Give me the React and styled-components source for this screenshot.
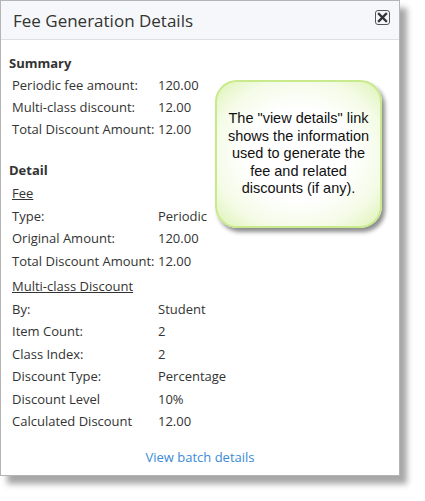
import React from 'react';
import styled, { createGlobalStyle } from 'styled-components';

const GlobalStyle = createGlobalStyle`
  html, body {
    margin: 0;
    padding: 0;
    background: #ffffff;
  }
  body {
    font-family: 'Open Sans', 'Liberation Sans', sans-serif;
    color: #333333;
  }
`;

const summary = [
  ['Periodic fee amount:', '120.00'],
  ['Multi-class discount:', '12.00'],
  ['Total Discount Amount:', '12.00'],
];

const fee = [
  ['Type:', 'Periodic'],
  ['Original Amount:', '120.00'],
  ['Total Discount Amount:', '12.00'],
];

const multiClass = [
  ['By:', 'Student'],
  ['Item Count:', '2'],
  ['Class Index:', '2'],
  ['Discount Type:', 'Percentage'],
  ['Discount Level', '10%'],
  ['Calculated Discount', '12.00'],
];

export default function App() {
  return (
    <Page>
      <GlobalStyle />
      <Dialog>
        <Header>
          <Title>Fee Generation Details</Title>
          <CloseButton aria-label="close">
            <svg width="11" height="11" viewBox="0 0 11 11">
              <path d="M2 2 L9 9 M9 2 L2 9" stroke="#333" strokeWidth="2.4" strokeLinecap="square" />
            </svg>
          </CloseButton>
        </Header>
        <Body>
          <SectionTitle>Summary</SectionTitle>
          <Table>
            {summary.map(([k, v]) => (
              <Row key={k} $h={22}>
                <Label>{k}</Label>
                <Value>{v}</Value>
              </Row>
            ))}
          </Table>

          <SectionTitle $top={19}>Detail</SectionTitle>
          <SubTitle $top={1}>Fee</SubTitle>
          <Table>
            {fee.map(([k, v]) => (
              <Row key={k}>
                <Label>{k}</Label>
                <Value>{v}</Value>
              </Row>
            ))}
          </Table>
          <SubTitle $top={3}>Multi-class Discount</SubTitle>
          <Table>
            {multiClass.map(([k, v]) => (
              <Row key={k}>
                <Label>{k}</Label>
                <Value>{v}</Value>
              </Row>
            ))}
          </Table>
          <Footer>
            <BatchLink href="#">View batch details</BatchLink>
          </Footer>
        </Body>
        <Callout>
          The "view details" link shows the information used to generate the fee and related discounts (if any).
        </Callout>
      </Dialog>
    </Page>
  );
}

const Page = styled.div`
  width: 425px;
  height: 501px;
  overflow: hidden;
`;

const Dialog = styled.div`
  position: relative;
  box-sizing: border-box;
  width: 400px;
  height: 476px;
  border: 1px solid #b4b4b4;
  background: #ffffff;
  box-shadow: 7px 8px 6px rgba(0, 0, 0, 0.35);
`;

const Header = styled.div`
  display: flex;
  align-items: center;
  justify-content: space-between;
  height: 38px;
  padding: 0 9px 0 12px;
  background: #f5f7fa;
  border-bottom: 1px solid #dcdfe3;
`;

const Title = styled.h1`
  margin: 0;
  font-size: 17px;
  font-weight: 400;
  color: #333;
`;

const CloseButton = styled.button`
  display: flex;
  align-items: center;
  justify-content: center;
  box-sizing: border-box;
  width: 15px;
  height: 15px;
  padding: 0;
  margin-top: -6px;
  border: 1px solid #555;
  border-radius: 3px;
  background: #f5f7fa;
`;

const Body = styled.div`
  padding: 12px 0 0 8px;
  font-size: 13px;
`;

const SectionTitle = styled.div`
  margin-top: ${(p) => p.$top || 0}px;
  font-weight: 700;
  line-height: 22px;
  color: #333;
`;

const SubTitle = styled.div`
  margin: ${(p) => p.$top || 0}px 0 0 3px;
  line-height: 22.5px;
  text-decoration: underline;
`;

const Table = styled.div`
  display: flex;
  flex-direction: column;
  padding-left: 3px;
`;

const Row = styled.div`
  display: grid;
  grid-template-columns: 146px 1fr;
  line-height: ${(p) => p.$h || 22.5}px;
`;

const Label = styled.span`
  white-space: nowrap;
`;

const Value = styled.span``;

const Footer = styled.div`
  display: flex;
  justify-content: center;
  padding-top: 13px;
  padding-right: 8px;
`;

const BatchLink = styled.a`
  color: #3b8bd6;
  text-decoration: none;
  line-height: 22px;
`;

const Callout = styled.div`
  position: absolute;
  left: 214px;
  top: 79px;
  box-sizing: border-box;
  width: 167px;
  height: 148px;
  padding: 0 10px;
  display: flex;
  align-items: center;
  justify-content: center;
  text-align: center;
  border: 2px solid #c9ea8c;
  border-radius: 22px;
  background: radial-gradient(ellipse at center, #ffffff 45%, #f4fbe6 75%, #ddf3b4 100%);
  box-shadow: 3px 4px 4px rgba(0, 0, 0, 0.45);
  font-family: 'Liberation Sans', Arial, sans-serif;
  font-size: 14.5px;
  line-height: 17.5px;
  color: #111;
`;
